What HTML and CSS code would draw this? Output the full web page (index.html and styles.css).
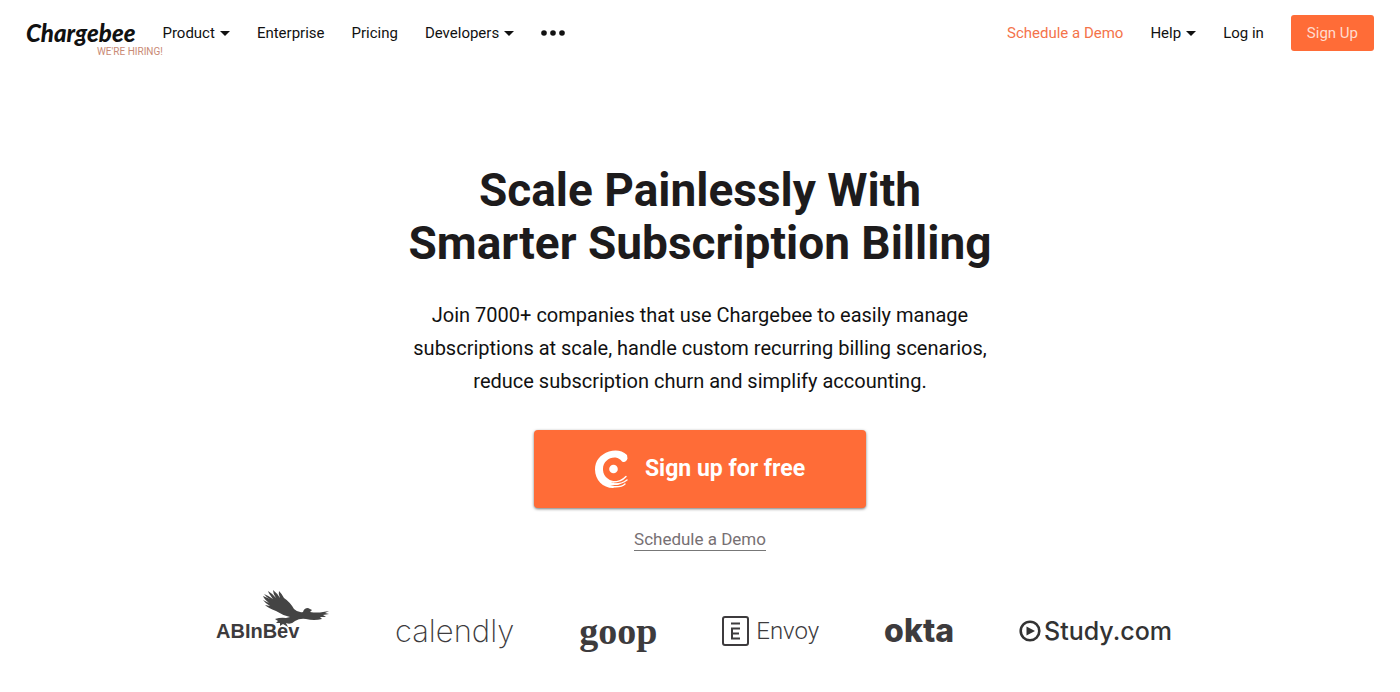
FILE: index.html
```html
<!DOCTYPE html>
<html lang="en">
<head>
<meta charset="utf-8">
<title>Chargebee</title>
<link rel="stylesheet" href="styles.css">
</head>
<body>
<header class="header">
  <a class="brand" href="#">Chargebee<span class="hiring">WE'RE HIRING!</span></a>
  <nav class="nav">
    <button class="nav-item" type="button">Product <span class="caret"></span></button>
    <a class="nav-item" href="#">Enterprise</a>
    <a class="nav-item" href="#">Pricing</a>
    <button class="nav-item" type="button">Developers <span class="caret"></span></button>
    <button class="nav-item" type="button" aria-label="More">
      <svg class="dots" viewBox="0 0 24 6"><circle cx="3" cy="3" r="2.8"/><circle cx="12" cy="3" r="2.8"/><circle cx="21" cy="3" r="2.8"/></svg>
    </button>
  </nav>
  <nav class="nav nav-end">
    <a class="nav-item accent" href="#">Schedule a Demo</a>
    <button class="nav-item" type="button">Help <span class="caret"></span></button>
    <a class="nav-item" href="#">Log in</a>
    <a class="signup" href="#">Sign Up</a>
  </nav>
</header>
<main class="hero">
  <h1 class="title">Scale Painlessly With<br>Smarter Subscription Billing</h1>
  <p class="lead">Join 7000+ companies that use Chargebee to easily manage<br>subscriptions at scale, handle custom recurring billing scenarios,<br>reduce subscription churn and simplify accounting.</p>
  <a class="cta" href="#">
    <svg class="cta-icon" viewBox="0 0 34 38">
      <path d="M32 5C27 0 20-.5 14 1.500C5 4.500 0 11 0 19.500C0 30 8 38 18 38L22 36.500 15 35 25 35 16 32 24 31.500C16 32 8.500 28 8 20C7.500 12 14 7 20.500 7.500C23.500 8 25.500 9.500 27 11.500C29.500 13 31.500 11.500 32.500 8.500Z" fill="#fff"/>
      <path d="M18 32Q26 32 31 26.500M20 34Q27 34 32 30M20 36.800Q27 37 30 34" fill="none" stroke="#fff" stroke-width="1.400" stroke-linecap="round"/>
      <circle cx="18.500" cy="19" r="4.300" fill="#fff"/>
    </svg>
    <span>Sign up for free</span>
  </a>
  <a class="demo" href="#">Schedule a Demo</a>
</main>
<section class="customers" aria-label="Customers">
  <div class="customer abinbev">
    <span>ABInBev</span>
    <svg class="eagle" viewBox="0 0 68 38">
      <path d="M8 9Q4 7 2 4Q7 6 11 9Q7 4 6 1Q11 4 14 8Q11 4 11 0Q16 4 18 8Q16 4 17 1Q20 4 22 8Q28 12 32 19Q36 23 41 22Q42 18 46 18L50 20L48 22Q55 23 61 22L67 21L63 23L67 24L61 25L64 27L58 27L60 29Q52 31 44 29Q38 28 33 31Q29 35 24 33L26 37L21 34L18 36L18 33L14 33L16 31L13 29Q19 27 24 28L28 27Q20 25 14 21Q6 18 3 15L8 16Q3 13 1 10L7 13Q2 9 1 6Z"/>
    </svg>
  </div>
  <div class="customer calendly">calendly</div>
  <div class="customer goop">goop</div>
  <div class="customer envoy">
    <svg class="envoy-icon" viewBox="0 0 27 30"><rect x="1" y="1" width="25" height="28" rx="2"/><path d="M9 7.500h9M18 12.500H10v10h8M10 17.500h7"/></svg>
    <span>Envoy</span>
  </div>
  <div class="customer okta">okta</div>
  <div class="customer study">
    <svg class="study-icon" viewBox="0 0 22 22"><circle cx="11" cy="11" r="9.300" fill="none" stroke="#333" stroke-width="2.600"/><path d="M7.500 6.500L16 11 7.500 15.500Z" fill="#333"/></svg>
    <span>Study.com</span>
  </div>
</section>
</body>
</html>
```

FILE: styles.css
```css
* { box-sizing: border-box; }
body {
  margin: 0;
  background: #fff;
  color: #111;
  font-family: Roboto, "Liberation Sans", sans-serif;
}
a { color: inherit; text-decoration: none; }
button { border: 0; padding: 0; background: none; color: inherit; font: inherit; cursor: pointer; }
.header {
  display: flex;
  align-items: center;
  gap: 27px;
  height: 66px;
  padding: 0 26px;
}
.brand {
  position: relative;
  font: italic 900 24px/32px Lato, sans-serif;
}
.hiring {
  position: absolute;
  top: 29px;
  left: 71px;
  white-space: nowrap;
  color: #c98a75;
  font: 10px/12px Roboto, sans-serif;
}
.nav { display: flex; align-items: center; gap: 27px; font-size: 15px; line-height: 20px; }
.nav-item { display: flex; align-items: center; gap: 5px; white-space: nowrap; }
.nav-end { margin-left: auto; }
.caret { border: 5px solid transparent; border-top-color: #111; border-bottom: 0; }
.dots { width: 24px; height: 6px; fill: #111; }
.accent { color: #f4734a; }
.signup {
  padding: 8px 16px;
  border-radius: 3px;
  background: #ff6c37;
  color: #ffdccf;
}
.hero { display: flex; flex-direction: column; align-items: center; padding-top: 98px; text-align: center; }
.title { margin: 0; color: #1d1b1c; font-size: 46px; line-height: 53px; font-weight: 700; }
.lead { margin: 29px 0 32px; font-size: 20px; line-height: 33px; }
.cta {
  display: flex;
  align-items: center;
  justify-content: center;
  gap: 16px;
  width: 332px;
  padding: 20px 0;
  border-radius: 4px;
  background: #ff6c37;
  box-shadow: 0 1px 3px #777;
  color: #fff;
  font-size: 23px;
  line-height: 38px;
  font-weight: 700;
}
.cta-icon { width: 34px; height: 38px; }
.demo { margin-top: 20px; border-bottom: 1px solid #777; color: #777073; font-size: 17px; line-height: 22px; }
.customers {
  display: flex;
  justify-content: space-between;
  max-width: 980px;
  margin: 38px auto 0;
  padding: 0 18px 0 6px;
  color: #3d3b3d;
}
.customer { display: flex; align-items: center; height: 84px; line-height: 32px; }
.abinbev { position: relative; width: 114px; font-family: "Liberation Sans", sans-serif; font-weight: 700; font-size: 20px; }
.eagle { position: absolute; top: 1px; right: 0; width: 68px; height: 38px; fill: #444; }
.calendly { font-family: Inter, sans-serif; font-weight: 200; font-size: 31px; }
.goop { font-family: "Liberation Serif", serif; font-weight: 700; font-size: 38px; }
.envoy { gap: 7px; font-weight: 300; font-size: 24px; }
.envoy-icon { width: 27px; height: 30px; fill: none; stroke: #3d3b3d; stroke-width: 2; }
.okta { font-family: Inter, sans-serif; font-weight: 800; font-size: 32px; }
.study { gap: 3px; color: #333; font-family: Inter, sans-serif; font-weight: 500; font-size: 25px; }
.study-icon { width: 22px; height: 22px; }
```
